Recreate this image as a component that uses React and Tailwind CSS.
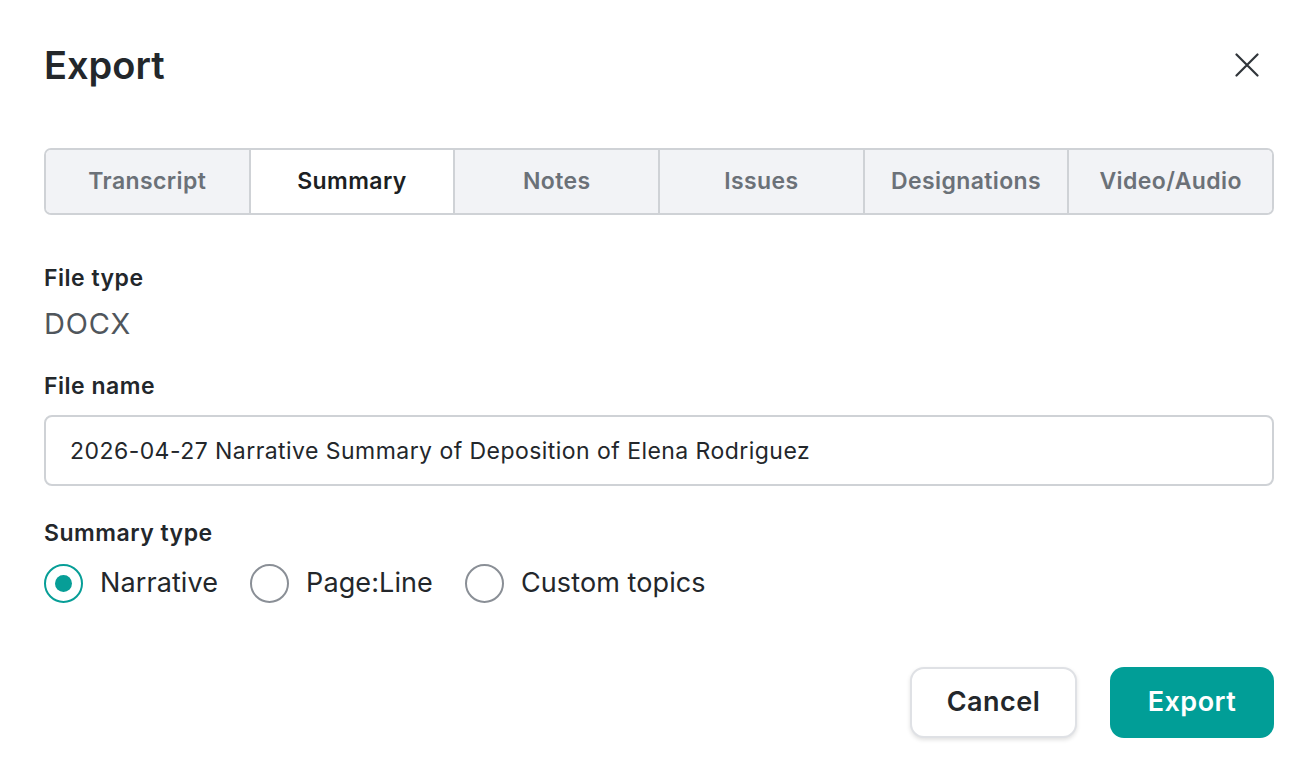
import * as React from 'react';

const TABS = ['Transcript', 'Summary', 'Notes', 'Issues', 'Designations', 'Video/Audio'];
const TYPES = ['Narrative', 'Page:Line', 'Custom topics'];

export default function App() {
  const [tab, setTab] = React.useState('Summary');
  const [type, setType] = React.useState('Narrative');
  const [name, setName] = React.useState('2026-04-27 Narrative Summary of Deposition of Elena Rodriguez');

  return (
    <div className="w-[1316px] h-[763px] bg-white pl-[44px] pr-[42px] pt-[40px] text-[#23272b]" style={{ fontFamily: 'Inter, "Noto Sans", sans-serif' }}>
      {/* Header */}
      <div className="flex items-center justify-between h-[50px]">
        <h1 className="text-[38px] font-semibold tracking-[0px]">Export</h1>
        <button className="mr-[15px] text-[#30353a]">
          <svg width="24" height="24" viewBox="0 0 24 24" fill="none" stroke="currentColor" strokeWidth="2.2" strokeLinecap="round">
            <path d="M1.5 1.5L22.5 22.5M22.5 1.5L1.5 22.5" />
          </svg>
        </button>
      </div>

      {/* Tabs */}
      <div className="mt-[58px] flex h-[67px] rounded-[7px] border-2 border-[#cfd2d6] overflow-hidden">
        {TABS.map((t, i) => (
          <button
            key={t}
            onClick={() => setTab(t)}
            className={`flex-1 text-[23px] font-semibold tracking-[0.4px] ${i > 0 ? 'border-l-2 border-[#cfd2d6]' : ''} ${
              tab === t ? 'bg-white text-[#1c1f23]' : 'bg-[#f2f3f6] text-[#6b7178]'
            }`}
          >
            {t}
          </button>
        ))}
      </div>

      {/* File type */}
      <div className="mt-[49px] text-[23px] font-semibold tracking-[0.5px] leading-[28px]">File type</div>
      <div className="mt-[15px] text-[29px] text-[#50565c] tracking-[0.8px] leading-[34px]">DOCX</div>

      {/* File name */}
      <div className="mt-[31px] text-[23px] font-semibold tracking-[0.5px] leading-[28px]">File name</div>
      <input
        value={name}
        onChange={(e) => setName(e.target.value)}
        className="mt-[15px] w-full h-[71px] rounded-[8px] border-2 border-[#cfd2d6] px-[24px] text-[23px] tracking-[0.45px] text-[#23272b] outline-none"
      />

      {/* Summary type */}
      <div className="mt-[33px] text-[23px] font-semibold tracking-[0.5px] leading-[28px]">Summary type</div>
      <div className="mt-[16px] flex items-center gap-[32px]">
        {TYPES.map((t) => (
          <label key={t} className="flex items-center gap-[17px] cursor-pointer" onClick={() => setType(t)}>
            <span
              className={`w-[39px] h-[39px] rounded-full border-2 flex items-center justify-center ${
                type === t ? 'border-[#079e97]' : 'border-[#8a8f96]'
              }`}
            >
              {type === t && <span className="w-[17px] h-[17px] rounded-full bg-[#079e97]" />}
            </span>
            <span className="text-[27px] tracking-[0.1px] text-[#23272b]">{t}</span>
          </label>
        ))}
      </div>

      {/* Footer */}
      <div className="mt-[63px] flex justify-end gap-[33px]">
        <button className="w-[167px] h-[71px] rounded-[14px] border-2 border-[#dfe1e5] bg-white shadow-[0_2px_4px_rgba(0,0,0,0.12)] text-[27px] font-semibold tracking-[0.5px] text-[#23272b]">
          Cancel
        </button>
        <button className="w-[164px] h-[71px] rounded-[14px] bg-[#019e97] text-[27px] font-semibold tracking-[0.5px] text-white">
          Export
        </button>
      </div>
    </div>
  );
}
